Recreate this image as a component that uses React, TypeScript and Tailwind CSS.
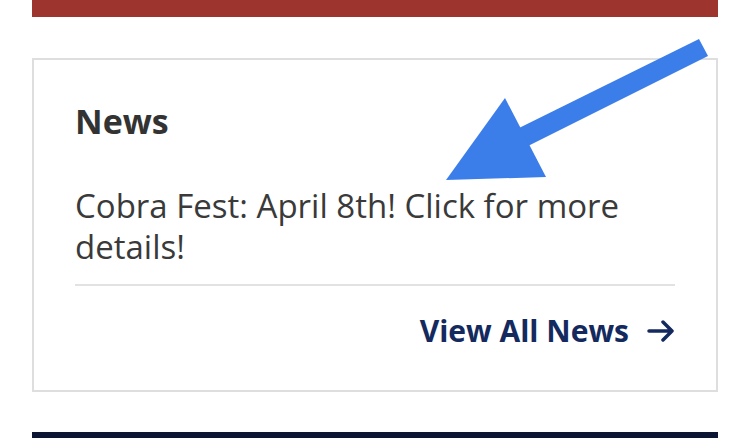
import React from 'react';

// Blue callout arrow pointing at the news item
function CalloutArrow() {
  return (
    <svg
      className="absolute left-0 top-0 pointer-events-none"
      width="730"
      height="438"
      viewBox="0 0 730 438"
    >
      <polygon points="699,39 708,56 524,148 515,130" fill="#3b7de9" />
      <polygon points="505,98 546,177 446,180" fill="#3b7de9" />
    </svg>
  );
}

export default function App() {
  return (
    <div className="relative w-[730px] h-[438px] overflow-hidden bg-white font-['Open_Sans',sans-serif]">
      <div className="mx-[32px] w-[686px]">
        <div className="h-[17px] bg-[#9e342e]" />

        <div className="mt-[41px] h-[334px] border-2 border-[#dedede] px-[41px] pt-[39px]">
          <h2 className="text-[34px] leading-[44px] font-bold text-[#333333]">News</h2>
          <a href="#" className="mt-[42px] block text-[33px] leading-[41px] text-[#3a3a3a]">
            Cobra Fest: April 8th! Click for more details!
          </a>
          <div className="mt-[17px] h-[2px] bg-[#e2e2e2]" />
          <div className="flex justify-end pt-[26px]">
            <a href="#" className="flex items-center gap-[18px] text-[30px] leading-[38px] font-bold text-[#142a5e]">
              <span>View All News</span>
              <svg width="28" height="22" viewBox="0 0 28 22" fill="none" stroke="#142a5e" strokeWidth="3.5" strokeLinecap="round" strokeLinejoin="round">
                <path d="M2 11h23M16 2l9 9-9 9" />
              </svg>
            </a>
          </div>
        </div>

        <div className="mt-[40px] h-[10px] bg-[#0c1633]" />
      </div>
      <CalloutArrow />
    </div>
  );
}
